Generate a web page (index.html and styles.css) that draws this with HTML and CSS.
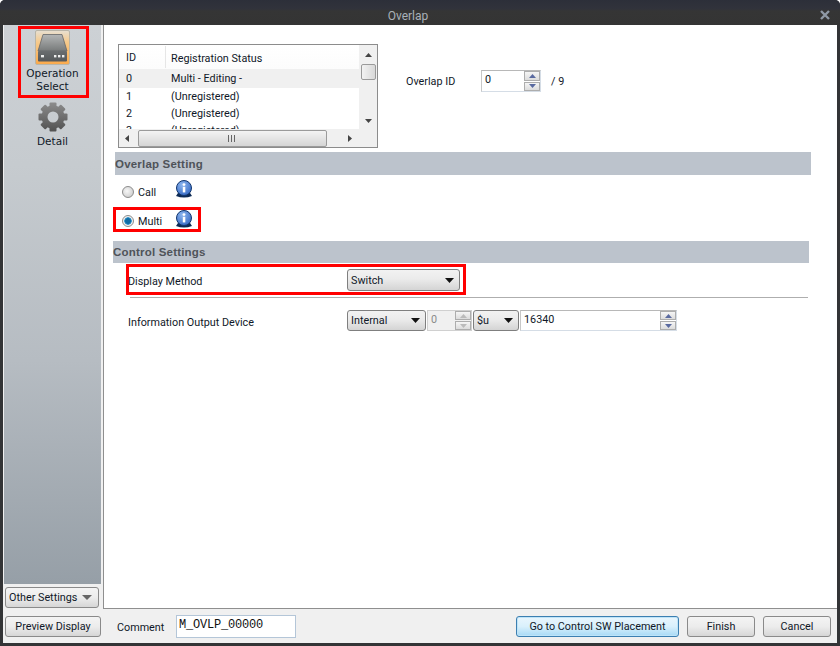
FILE: index.html
```html
<!DOCTYPE html>
<html lang="en">
<head>
<meta charset="utf-8">
<title>Overlap</title>
<link rel="stylesheet" href="styles.css">
</head>
<body>
<div class="window">
  <header class="titlebar">
    <span class="title">Overlap</span>
    <svg class="close" width="12" height="10" viewBox="0 0 12 10"><path d="M2 1 L10 9 M10 1 L2 9" stroke="#8f99a6" stroke-width="2.4"/></svg>
  </header>
  <div class="client">
    <div class="main">
      <aside class="sidebar">
        <div class="rail">
          <div class="nav-item">
            <div class="nav-icon active">
              <svg width="33" height="33" viewBox="0 0 33 33">
                <defs>
                  <linearGradient id="drv" x1="0" y1="0" x2="0" y2="1"><stop offset="0" stop-color="#b4b6b6"/><stop offset="1" stop-color="#777a7a"/></linearGradient>
                  <linearGradient id="drb" x1="0" y1="0" x2="0" y2="1"><stop offset="0" stop-color="#6a6d6f"/><stop offset="1" stop-color="#55585a"/></linearGradient>
                </defs>
                <path d="M7 3.5 H26 L31 20 H2 Z" fill="url(#drv)" stroke="#64676a" stroke-width="0.8"/>
                <rect x="2" y="20" width="29" height="10.5" rx="1" fill="url(#drb)"/>
                <rect x="5" y="24" width="3" height="2.4" fill="#eee"/>
                <rect x="18" y="24" width="2.4" height="2.4" fill="#eee"/>
                <rect x="22" y="24" width="2.4" height="2.4" fill="#eee"/>
                <rect x="26" y="24" width="2.4" height="2.4" fill="#eee"/>
              </svg>
            </div>
            <div class="nav-label">Operation<br>Select</div>
          </div>
          <div class="nav-item second">
            <svg class="gear" width="30" height="30" viewBox="0 0 30 30">
              <defs>
                <linearGradient id="gr" x1="0" y1="0" x2="0" y2="1"><stop offset="0" stop-color="#8d8d8d"/><stop offset="1" stop-color="#505050"/></linearGradient>
                <mask id="gm">
                  <g fill="#fff">
                    <circle cx="15" cy="15" r="11.5"/>
                    <rect x="11.5" y="0.5" width="7" height="29" rx="1"/>
                    <rect x="11.5" y="0.5" width="7" height="29" rx="1" transform="rotate(45 15 15)"/>
                    <rect x="11.5" y="0.5" width="7" height="29" rx="1" transform="rotate(90 15 15)"/>
                    <rect x="11.5" y="0.5" width="7" height="29" rx="1" transform="rotate(135 15 15)"/>
                  </g>
                  <circle cx="15" cy="15" r="5.5" fill="#000"/>
                </mask>
              </defs>
              <rect width="30" height="30" fill="url(#gr)" mask="url(#gm)"/>
            </svg>
            <div class="nav-label detail">Detail</div>
          </div>
        </div>
        <button class="other-btn"><span class="other-text">Other Settings</span><svg width="10" height="5" viewBox="0 0 10 5"><path d="M0 0 H10 L5 5 Z" fill="#666"/></svg></button>
      </aside>
      <main class="panel">
        <div class="top-row">
          <div class="list">
            <div class="list-body">
              <div class="list-cols">
                <div class="list-head"><span class="col-id">ID</span><span class="col-status">Registration Status</span></div>
                <div class="list-row selected"><span class="col-id">0</span><span>Multi - Editing -</span></div>
                <div class="list-row"><span class="col-id">1</span><span>(Unregistered)</span></div>
                <div class="list-row"><span class="col-id">2</span><span>(Unregistered)</span></div>
                <div class="list-row"><span class="col-id">3</span><span>(Unregistered)</span></div>
              </div>
              <div class="vscroll">
                <svg width="7" height="4" viewBox="0 0 7 4"><path d="M0 4 H7 L3.5 0 Z" fill="#444"/></svg>
                <div class="vthumb"></div>
                <svg class="vdown" width="7" height="4" viewBox="0 0 7 4"><path d="M0 0 H7 L3.5 4 Z" fill="#444"/></svg>
              </div>
            </div>
            <div class="hscroll">
              <svg width="4" height="7" viewBox="0 0 4 7"><path d="M4 0 V7 L0 3.5 Z" fill="#444"/></svg>
              <div class="hthumb"><span class="grip"></span></div>
              <svg class="hright" width="4" height="7" viewBox="0 0 4 7"><path d="M0 0 V7 L4 3.5 Z" fill="#444"/></svg>
            </div>
          </div>
          <div class="id-field">
            <label class="id-label">Overlap ID</label>
            <div class="spin id-spin">
              <span class="spin-text">0</span>
              <div class="spin-btns">
                <span class="spin-btn"><svg width="7" height="4" viewBox="0 0 7 4"><path d="M0 4 H7 L3.5 0 Z" fill="#5a6aa0"/></svg></span>
                <span class="spin-btn"><svg width="7" height="4" viewBox="0 0 7 4"><path d="M0 0 H7 L3.5 4 Z" fill="#5a6aa0"/></svg></span>
              </div>
            </div>
            <span class="id-max">/ 9</span>
          </div>
        </div>

        <h2 class="section first">Overlap Setting</h2>
        <div class="radio-row call">
          <span class="radio"></span><span class="radio-label">Call</span>
          <svg class="info" width="18" height="18" viewBox="0 0 18 18"><use href="#info"/></svg>
        </div>
        <div class="radio-row multi">
          <span class="radio on"></span><span class="radio-label">Multi</span>
          <svg class="info" width="18" height="18" viewBox="0 0 18 18">
            <defs>
              <radialGradient id="ib" cx="0.4" cy="0.3" r="0.8"><stop offset="0" stop-color="#8fb8f0"/><stop offset="1" stop-color="#2d62c0"/></radialGradient>
              <g id="info">
                <path d="M1 16 Q9 19 17 16 L15 13 H3 Z" fill="#0c2a55"/>
                <circle cx="9" cy="8" r="7.5" fill="url(#ib)" stroke="#10356e" stroke-width="1"/>
                <circle cx="9" cy="4.6" r="1.4" fill="#fff"/>
                <rect x="7.8" y="6.8" width="2.5" height="5.6" fill="#fff"/>
              </g>
            </defs>
            <use href="#info"/>
          </svg>
        </div>

        <h2 class="section second">Control Settings</h2>
        <div class="form-row display">
          <span class="form-label">Display Method</span>
          <div class="combo switch"><span>Switch</span><svg width="9" height="5" viewBox="0 0 9 5"><path d="M0 0 H9 L4.5 5 Z" fill="#111"/></svg></div>
        </div>
        <hr class="rule">
        <div class="form-row device">
          <span class="form-label">Information Output Device</span>
          <div class="combo internal"><span>Internal</span><svg width="9" height="5" viewBox="0 0 9 5"><path d="M0 0 H9 L4.5 5 Z" fill="#111"/></svg></div>
          <div class="spin disabled">
            <span class="spin-text">0</span>
            <div class="spin-btns">
              <span class="spin-btn"><svg width="7" height="4" viewBox="0 0 7 4"><path d="M0 4 H7 L3.5 0 Z" fill="#bbb"/></svg></span>
              <span class="spin-btn"><svg width="7" height="4" viewBox="0 0 7 4"><path d="M0 0 H7 L3.5 4 Z" fill="#bbb"/></svg></span>
            </div>
          </div>
          <div class="combo unit"><span>$u</span><svg width="9" height="5" viewBox="0 0 9 5"><path d="M0 0 H9 L4.5 5 Z" fill="#111"/></svg></div>
          <div class="spin address">
            <span class="spin-text">16340</span>
            <div class="spin-btns">
              <span class="spin-btn"><svg width="7" height="4" viewBox="0 0 7 4"><path d="M0 4 H7 L3.5 0 Z" fill="#5a6aa0"/></svg></span>
              <span class="spin-btn"><svg width="7" height="4" viewBox="0 0 7 4"><path d="M0 0 H7 L3.5 4 Z" fill="#5a6aa0"/></svg></span>
            </div>
          </div>
        </div>
      </main>
    </div>
    <footer class="footer">
      <button class="btn preview">Preview Display</button>
      <span class="comment-label">Comment</span>
      <div class="comment-input">M_OVLP_00000</div>
      <button class="btn primary">Go to Control SW Placement</button>
      <button class="btn finish">Finish</button>
      <button class="btn cancel">Cancel</button>
    </footer>
  </div>
  <div class="mark mark-op"></div>
  <div class="mark mark-multi"></div>
  <div class="mark mark-display"></div>
</div>
</body>
</html>
```
FILE: styles.css
```css
* { box-sizing: border-box; }
html, body { margin: 0; padding: 0; }
body { width: 840px; height: 646px; overflow: hidden; font-family: Roboto, "Liberation Sans", Arial, sans-serif; font-size: 10.8px; color: #101828; }

.window { position: relative; width: 840px; height: 646px; display: flex; flex-direction: column; background: #333436; padding: 0 3px 3px; border-radius: 5px 5px 0 0; }
.titlebar { position: relative; height: 25px; margin: 0 -3px; flex: none; display: flex; align-items: center; justify-content: center; padding-right: 24px; background: linear-gradient(#2c2f39 0, #31333b 9px, #353535 11px, #343434 100%); border-radius: 5px 5px 0 0; }
.title { color: #a9b0b9; font-size: 12px; position: relative; top: 3px; }
.close { position: absolute; right: 9px; top: 10px; }

.client { flex: 1; display: flex; flex-direction: column; background: #f0f0f0; min-height: 0; }
.main { height: 584px; display: flex; flex: none; }

.sidebar { width: 100px; flex: none; display: flex; flex-direction: column; padding-left: 1px; }
.rail { height: 559px; width: 97px; background: linear-gradient(#cdd1d5 0, #c6cbcf 25%, #b6bcc2 60%, #969fa7 100%); display: flex; flex-direction: column; align-items: center; padding-top: 5px; }
.nav-item { display: flex; flex-direction: column; align-items: center; }
.nav-item.second { margin-top: 9px; }
.nav-icon { width: 35px; height: 35px; display: flex; align-items: center; justify-content: center; }
.nav-icon.active { background: linear-gradient(#e8dfcf 0, #f6c98a 35%, #fbaa4c 100%); border: 1px solid #b9b5a8; border-radius: 2px; }
.nav-label { font-family: "DejaVu Sans", Verdana, sans-serif; font-size: 10.5px; line-height: 13px; text-align: center; color: #101828; margin-top: 2px; }
.nav-label.detail { margin-top: 3px; }
.gear { display: block; }
.other-btn { width: 94px; height: 21px; margin: 3px 0 0 1px; padding: 0 6px 0 3px; display: flex; align-items: center; justify-content: space-between; border: 1px solid #8a8a8a; border-radius: 3px; background: linear-gradient(#f4f4f4 0, #ececec 50%, #d6d6d6 100%); font: 10.8px Roboto, "Liberation Sans", Arial, sans-serif; color: #101828; }
.other-text { line-height: 21px; }

.panel { width: 734px; flex: none; background: #fff; border-left: 1px solid #8f8f8f; border-bottom: 1px solid #8f8f8f; padding-top: 19px; }
.top-row { display: flex; height: 104px; }
.list { margin-left: 14px; width: 260px; height: 104px; border: 1px solid #8c8c8c; display: flex; flex-direction: column; background: #fff; }
.list-body { display: flex; height: 84px; }
.list-cols { flex: 1; overflow: hidden; }
.list-head { height: 24px; display: flex; align-items: center; background: linear-gradient(#fff 0, #fcfcfc 100%); }
.col-id { width: 46px; padding-left: 7px; flex: none; }
.col-status { padding-left: 5px; border-left: 1px solid #e6e6e6; height: 22px; line-height: 26px; }
.list-row { height: 17px; line-height: 17px; display: flex; }
.list-row .col-id + span { padding-left: 6px; }
.list-row.selected { background: #f0f0f0; height: 19px; line-height: 19px; }
.vscroll { width: 18px; background: #f0f0f0; display: flex; flex-direction: column; align-items: center; padding-top: 8px; flex: none; }
.vthumb { width: 15px; height: 16px; margin-top: 7px; background: linear-gradient(90deg, #f2f2f2, #d8d8d8); border: 1px solid #9a9a9a; border-radius: 2px; }
.vdown { margin-top: 39px; }
.hscroll { height: 18px; background: #f0f0f0; display: flex; align-items: center; padding: 0 0 0 6px; }
.hthumb { width: 189px; height: 17px; margin-left: 9px; background: linear-gradient(#f3f3f3, #d5d5d5); border: 1px solid #9a9a9a; border-radius: 2px; display: flex; align-items: center; justify-content: center; }
.hright { margin-left: 21px; }
.grip { width: 9px; height: 7px; background: repeating-linear-gradient(90deg, #666 0 1px, transparent 1px 3px); }

.id-field { display: flex; align-items: center; height: 22px; margin: 26px 0 0 28px; }
.id-label { width: 75px; }
.id-spin { width: 60px; height: 22px; }
.id-max { margin-left: 10px; }

.spin { display: flex; justify-content: space-between; background: #fff; border: 1px solid #d5dde6; border-top-color: #b8b8b8; border-left-color: #c8c8c8; padding-left: 3px; }
.spin-text { line-height: 17px; }
.spin-btns { width: 16px; display: flex; flex-direction: column; gap: 1px; flex: none; padding: 0; }
.spin-btn { flex: 1; display: flex; align-items: center; justify-content: center; background: linear-gradient(#f5f5f5, #dcdcdc); border: 1px solid #adadad; }

.section { font: bold 11.5px "Liberation Sans", Arial, sans-serif; letter-spacing: .2px; color: #4f5359; background: #bcc3cc; margin: 0; display: flex; align-items: center; }
.section.first { margin: 4px 26px 0 11px; height: 23px; }
.section.second { margin: 0 28px 0 9px; height: 22px; }

.radio-row { display: flex; align-items: center; height: 18px; padding-left: 18px; }
.radio-row.call { margin-top: 7px; }
.radio-row.multi { margin-top: 11px; margin-bottom: 12px; }
.radio { width: 12px; height: 12px; border-radius: 50%; border: 1px solid #8c8c8c; background: radial-gradient(circle at 40% 40%, #f7f7f7, #c4c4c4); flex: none; position: relative; top: 1px; }
.radio.on { background: radial-gradient(circle, #0f6ca5 0 2.5px, #3a9bd0 3.5px, #eee 4px); }
.radio-label { width: 37px; margin-left: 4px; position: relative; top: 1px; }
.info { display: block; position: relative; top: -2px; }
.radio-row.multi .info { top: -1px; }

.form-row { display: flex; align-items: center; }
.form-label { width: 219px; flex: none; position: relative; top: 1px; }
.form-row.device .form-label { top: 2px; }
.form-row.display { margin: 6px 0 0 24px; height: 22px; }
.form-row.device { margin: 12px 0 0 24px; height: 21px; }
.rule { margin: 6px 29px 0 26px; height: 1px; border: 0; background: #aeaeae; }

.combo { display: flex; align-items: center; justify-content: space-between; border: 1px solid #7f7f7f; border-radius: 3px; padding: 0 5px 0 3px; background: linear-gradient(#f2f2f2 0, #ebebeb 45%, #d4d4d4 100%); color: #101828; flex: none; }
.combo.switch { width: 113px; height: 22px; }
.combo.internal { width: 79px; height: 21px; }
.combo.unit { width: 46px; height: 21px; margin-left: 1px; }
.spin.disabled { width: 45px; height: 21px; background: #f0f0f0; color: #8a8a8a; margin-left: 1px; border-color: #d0d0d0; }
.spin.address { width: 157px; height: 21px; margin-left: 1px; }

.footer { height: 34px; flex: none; display: flex; align-items: flex-start; padding-top: 7px; background: #f0f0f0; }
.btn { height: 21px; border: 1px solid #8a8a8a; border-radius: 3px; background: linear-gradient(#f4f4f4 0, #ececec 50%, #d6d6d6 100%); font: 10.8px Roboto, "Liberation Sans", Arial, sans-serif; color: #101828; padding: 0; flex: none; }
.btn.preview { width: 96px; margin-left: 2px; }
.comment-label { margin-left: 16px; line-height: 24px; width: 59px; }
.comment-input { width: 120px; height: 23px; margin-top: -1px; border: 1px solid #b4c6d8; background: #fff; font: 12px "Liberation Mono", monospace; line-height: 19px; padding-left: 2px; letter-spacing: -.2px; color: #111; }
.btn.primary { width: 163px; margin-left: 220px; border-color: #3c7fb1; background: linear-gradient(#eaf6fd 0, #d9f0fc 50%, #a7d9f5 100%); box-shadow: inset 0 0 0 1px #bfe4f8; }
.btn.finish { width: 68px; margin-left: 8px; }
.btn.cancel { width: 68px; margin-left: 8px; }

.mark { position: absolute; border: 3px solid #f00; pointer-events: none; }
.mark-op { left: 18px; top: 26px; width: 71px; height: 72px; }
.mark-multi { left: 113px; top: 207px; width: 88px; height: 25px; }
.mark-display { left: 126px; top: 264px; width: 340px; height: 31px; }
```
